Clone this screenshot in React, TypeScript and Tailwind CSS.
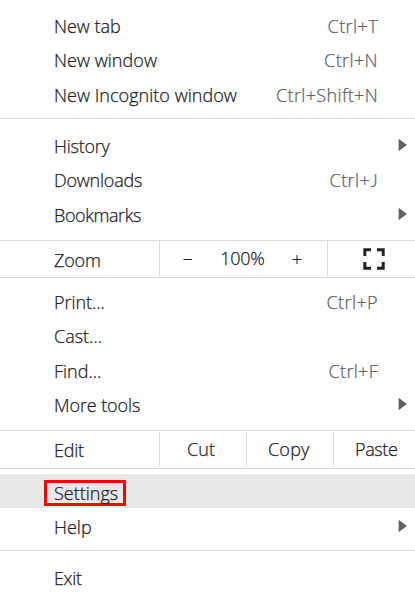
import type { ReactNode } from "react";

function Item({ label, track = "", keys, keysTrack = "tracking-[0.4px]", submenu = false, height = "h-[34px]" }: {
  label: string;
  track?: string;
  keys?: ReactNode;
  keysTrack?: string;
  submenu?: boolean;
  height?: string;
}) {
  return (
    <div className={`flex shrink-0 items-start pl-[54px] ${height}`}>
      <span className={`pt-px ${track}`}>{label}</span>
      {keys && <span className={`ml-auto mr-[37px] pt-px text-[#5f6368] ${keysTrack}`}>{keys}</span>}
      {submenu && (
        <svg className="ml-auto mr-2 mt-[11px] h-3 w-[9px]" viewBox="0 0 9 12" fill="#606266">
          <path d="M0.6 -0.2 L9 6 L0.6 12.2 Z" />
        </svg>
      )}
    </div>
  );
}

export default function App() {
  return (
    <div className="flex h-[600px] w-[415px] flex-col overflow-hidden whitespace-nowrap bg-white font-['Open_Sans',sans-serif] text-[18px] font-light leading-[34px] text-[#202124] [-webkit-text-stroke:0.25px]">
      <section className="flex h-[119px] shrink-0 flex-col border-b border-[#dadce0] pt-2">
        <Item label="New tab" keys="Ctrl+T" />
        <Item label="New window" track="tracking-[0.04px]" keys="Ctrl+N" height="h-[35px]" />
        <Item label="New Incognito window" track="tracking-[0.04px]" keys="Ctrl+Shift+N" keysTrack="tracking-[0.35px]" />
      </section>

      <section className="flex h-[122px] shrink-0 flex-col border-b border-[#dadce0] pt-[9px]">
        <Item label="History" track="tracking-[-0.25px]" submenu />
        <Item
          label="Downloads"
          track="tracking-[-0.22px]"
          keys={<>Ctrl+<span className="font-['Lato'] font-light">J</span></>}
          height="h-[35px]"
        />
        <Item label="Bookmarks" track="tracking-[-0.41px]" submenu />
      </section>

      <section className="flex h-[37px] shrink-0 border-b border-[#dadce0]">
        <div className="w-[159px] pl-[54px] pt-0.5 tracking-[-0.16px]">Zoom</div>
        <div className="flex h-[35px] w-[168px] border-l border-[#dadce0]">
          <button className="flex w-[56px] items-center justify-center">
            <svg width="10" height="10" viewBox="0 0 10 10" stroke="#202124"><path d="M0.5 5.5H9" /></svg>
          </button>
          <span className="w-[53px] text-center tracking-[-0.27px]">100%</span>
          <button className="flex w-[56px] items-center justify-center pr-px">
            <svg width="10" height="10" viewBox="0 0 10 10" stroke="#202124"><path d="M0.5 5.5H9.5M5 1V10" /></svg>
          </button>
        </div>
        <button className="flex h-[35px] flex-1 items-start border-l border-[#dadce0] pl-[35px] pt-[7px]">
          <svg width="22" height="22" viewBox="0 0 22 22" fill="none" stroke="#202124" strokeWidth="3">
            <path d="M1.8 8V1.8H8M14 1.8H20.2V8M20.2 14V20.2H14M8 20.2H1.8V14" />
          </svg>
        </button>
      </section>

      <section className="flex h-[153px] shrink-0 flex-col border-b border-[#dadce0] pt-1.5">
        <Item label="Print..." track="tracking-[-0.05px]" keys="Ctrl+P" />
        <Item label="Cast..." height="h-[35px]" />
        <Item label="Find..." keys="Ctrl+F" keysTrack="tracking-[0.3px]" />
        <Item label="More tools" track="tracking-[-0.1px]" submenu />
      </section>

      <section className="flex h-[38px] shrink-0 border-b border-[#dadce0]">
        <div className="w-[159px] pl-[54px] pt-0.5 tracking-[-0.24px]">Edit</div>
        <button className="mt-px h-[34px] w-[87px] border-l border-[#dadce0] pl-[27px] text-left tracking-[0.1px]">Cut</button>
        <button className="mt-px h-[34px] w-[87px] border-l border-[#dadce0] pl-[21px] text-left tracking-[0.2px]">Copy</button>
        <button className="mt-px h-[34px] flex-1 border-l border-[#dadce0] pl-[21px] text-left tracking-[-0.37px]">Paste</button>
      </section>

      <section className="flex h-[82px] shrink-0 flex-col border-b border-[#dadce0] pt-[5px]">
        <div className="mb-px flex h-[34px] shrink-0 bg-[#e8e8e8] pl-[44px] pt-1.5">
          <div className="flex h-[26px] w-[82px] items-center border-[3px] border-[#ff0000] pb-px pl-[7px]">Settings</div>
        </div>
        <Item label="Help" submenu />
      </section>

      <section className="pt-[9px]">
        <Item label="Exit" track="tracking-[-0.32px]" />
      </section>
    </div>
  );
}
